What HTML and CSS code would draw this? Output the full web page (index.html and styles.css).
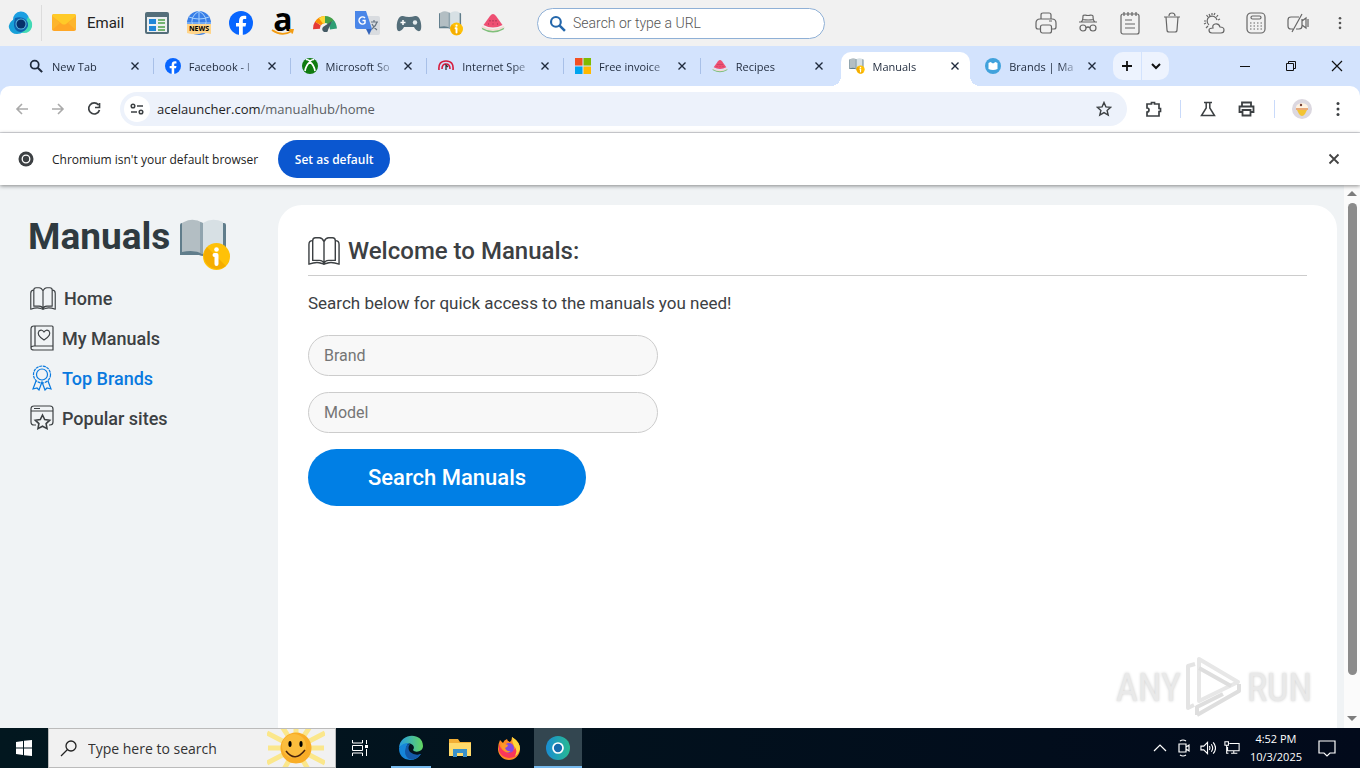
FILE: index.html
```html
<!DOCTYPE html>
<html lang="en">
	<head>
		<meta charset="UTF-8">
		<meta name="viewport" content="width=device-width, initial-scale=1.0">
		<title>Manuals</title>
		<link rel="stylesheet" href="styles.css">
	</head>
	<body>
		<!-- shared icons -->
		<svg class="sprite" aria-hidden="true">
			<symbol id="i-close" viewBox="0 0 16 16"><path d="M4 4l8 8M12 4l-8 8" fill="none" stroke="currentColor" stroke-width="1.6"/></symbol>
			<symbol id="i-search" viewBox="0 0 16 16"><circle cx="6.5" cy="6.5" r="4.6" fill="none" stroke="currentColor" stroke-width="2"/><path d="M10 10l5 5" stroke="currentColor" stroke-width="2.4"/></symbol>
			<symbol id="i-dots" viewBox="0 0 16 16"><g fill="currentColor"><circle cx="8" cy="2.5" r="1.5"/><circle cx="8" cy="8" r="1.5"/><circle cx="8" cy="13.5" r="1.5"/></g></symbol>
			<symbol id="i-facebook" viewBox="0 0 24 24"><circle cx="12" cy="12" r="12" fill="#0866ff"/><path d="M10 24v-8.500H7V12h3v-2c0-3.500 1.800-5.200 5-5.200.8 0 1.600.1 2.200.3v3H15.500c-1.300 0-1.700.7-1.700 1.700V12h3.400l-.7 3.500h-2.700V24z" fill="#fff"/></symbol>
			<symbol id="i-melon" viewBox="0 0 24 24"><path d="M12 3q-1.500 0-3 2L2.500 14q9.500 5 19 0L15 5q-1.500-2-3-2z" fill="#ee4f72"/><path d="M1.500 15q10.500 6 21 0l.8 1q-11.300 7.500-22.600 0z" fill="#f6d9d3"/><path d="M.5 16.500q11.500 7 23 0l-1 2q-10.500 6-21 0z" fill="#7fbf7a"/><path d="M9 9v1.500m3-1.500v1.500m3-1.500v1.500M7.500 12.500v1m4.500-1v1m4.500-1v1" stroke="#9c3350" stroke-width="1"/></symbol>
			<symbol id="i-manual" viewBox="0 0 50 52"><path d="M0 6q0-2 2-2h42q2 0 2 2v30H27q-4 2-8 0H0z" fill="#607d8b"/><path d="M4 3q9-5 19 1v31q-9-5-21-2V4z" fill="#b3bec3"/><path d="M23 4q9-6 20-1v30q-11-3-20 2z" fill="#d7e0e4"/><path d="M20 3l3 1v31l-3-1z" fill="#90a4ae"/><circle cx="36.500" cy="37.500" r="13.500" fill="#ffc107"/><path d="M27 28a13.500 13.500 0 0 0 19 19z" fill="#f5ad00"/><circle cx="36.500" cy="30.500" r="2.300" fill="#fff"/><path d="M34.500 36h2v9" stroke="#fff" stroke-width="4" stroke-linecap="round" stroke-linejoin="round" fill="none"/></symbol>
			<symbol id="i-book" viewBox="0 0 34 30"><g fill="none" stroke="currentColor" stroke-width="1.5" stroke-linejoin="round"><path d="M17 5v24M17 5q-2-4-5-4H8Q5 1 5 4v21h7q4 0 5 4 1-4 5-4h7V4q0-3-3-3h-4q-3 0-5 4z"/><path d="M5 4Q1 4 1 8v21q8-3 13-1l3 1 3-1q5-2 13 1V8q0-4-4-4"/></g></symbol>
		</svg>

		<header class="launcher">
			<button class="tool" aria-label="Launcher">
				<svg width="26" height="26" viewBox="0 0 26 26"><path d="M5 10a8 8 0 0 1 16-1q-1 3-3 3-4-5-9-1-3 0-4-1z" fill="#1c9fe2"/><path d="M20 7q5 4 4 10-2 6-8 6-5 0-7-4 7 1 9-5 0-4 2-7z" fill="#42d9b5"/><path d="M6 9q-6 4-5 9 2 6 8 6 4 0 6-2-7-1-8-7 0-4-1-6z" fill="#17a0d8"/><path d="M7 8q6-2 10 1 5 4 2 9-4 6-10 3-5-4-2-13z" fill="#0d62ae"/><circle cx="13" cy="14" r="5.500" fill="#58b4dc"/><circle cx="13" cy="14" r="4.500" fill="#06306a"/></svg>
			</button>
			<button class="email">
				<svg width="24" height="18" viewBox="0 0 24 18"><rect width="24" height="17" rx="2" fill="#ffa726"/><path d="M0 16V2l8 7zM24 16V2l-8 7z" fill="#fdb52c"/><path d="M1 0h22l1 2-10 8q-2 1-4 0L0 2z" fill="#ffca28"/></svg>
				<span>Email</span>
			</button>
			<button class="tool" aria-label="Portal">
				<svg width="26" height="24" viewBox="0 0 26 24"><rect x="1" y="1" width="24" height="22" rx="2" fill="#546e7a"/><path d="M3 6h20v15H3z" fill="#eceff1"/><path d="M5 8h7v5H5zM5 15h7v5H5z" fill="#2086d8"/><path d="M14 9h7M14 12h7M14 16h7M14 19h7" stroke="#4ba047" stroke-width="1.600"/></svg>
			</button>
			<button class="tool" aria-label="News">
				<svg width="26" height="26" viewBox="0 0 26 26"><circle cx="13" cy="13" r="12" fill="#397fe7"/><path d="M1 13h24M13 1v14M3 7q10 4 20 0M13 1Q3 7 7 16M13 1q10 6 6 15" fill="none" stroke="#a7d2ff"/><path d="M1 14h24v10q-6-2-12 0-6 1-12-1z" fill="#ffd58a"/><text x="13" y="21" class="news-text">NEWS</text></svg>
			</button>
			<button class="tool" aria-label="Facebook"><svg width="24" height="24"><use href="#i-facebook"/></svg></button>
			<button class="tool amazon" aria-label="Amazon">
				<span>a</span>
				<svg width="24" height="8" viewBox="0 0 24 8"><path d="M1 1q10 7 20 1M18 1l4-.5-1 4" fill="none" stroke="#f39c12" stroke-width="1.700"/></svg>
			</button>
			<button class="tool" aria-label="Speed test">
				<svg width="26" height="18" viewBox="0 0 26 18"><g fill="none" stroke-width="7"><path d="M4.500 15A8.500 8.500 0 0 1 6 9.500" stroke="#e53935"/><path d="M6 9.500Q8 6 13 5.500" stroke="#fb8c00"/><path d="M9 7q2-1.500 4-1.500" stroke="#fdd835"/><path d="M13 5.500q4 0 6 3" stroke="#43a047"/><path d="M19 8.500q2 2 2.500 6.500" stroke="#2e9e74"/></g><path d="M20 7l-9 6q-2 3 1 5 4 1 4-2z" fill="#455a64"/></svg>
			</button>
			<button class="tool" aria-label="Translate">
				<svg width="26" height="26" viewBox="0 0 26 26"><path d="M10 6h14q2 0 2 2v15q0 2-2 2H15z" fill="#d9dce0"/><path d="M1 1h11l6 18H3q-2 0-2-2z" fill="#4a86e8"/><path d="M12 19h6l-3 6z" fill="#3464ba"/><path d="M11 8a3.500 3.500 0 1 0 0 5V10.500H8.500" fill="none" stroke="#fff" stroke-width="1.500"/><path d="M17 12h7m-4-2v2m3 0q-1 4-5 7m0-5q2 4 5 6" fill="none" stroke="#687582" stroke-width="1.200"/></svg>
			</button>
			<button class="tool" aria-label="Games">
				<svg width="26" height="18" viewBox="0 0 26 18"><path d="M7 2q6 2 12 0c5-1 7 8 6 13-1 4-5 2-7-2H8c-2 4-6 6-7 2C0 10 2 1 7 2z" fill="#546e7a"/><path d="M7 6v5M4.500 8.500h5" stroke="#fff" stroke-width="1.500"/><circle cx="19" cy="8.500" r="2.200" fill="#e6ecee"/></svg>
			</button>
			<button class="tool" aria-label="Manuals"><svg width="24" height="25"><use href="#i-manual"/></svg></button>
			<button class="tool" aria-label="Recipes"><svg width="26" height="24"><use href="#i-melon"/></svg></button>
			<label class="top-search">
				<svg width="17" height="17"><use href="#i-search"/></svg>
				<input type="text" placeholder="Search or type a URL" aria-label="Search or type a URL">
			</label>
			<div class="launcher-right">
				<button class="tool" aria-label="Print"><svg class="line" width="22" height="22" viewBox="0 0 22 22"><path d="M6 7V3q0-2 2-2h6q2 0 2 2v4M5 17H3q-2 0-2-2v-4q0-4 4-4h12q4 0 4 4v4q0 2-2 2h-2M14 9h3"/><rect x="5.500" y="13" width="11" height="8" rx="2"/></svg></button>
				<button class="tool" aria-label="Incognito"><svg class="line" width="20" height="18" viewBox="0 0 20 18"><path d="M1 8h18M3 8q2-1 2-6 0-1 2-1 3 1 6 0 2 0 2 1 0 5 2 6M4.500 5.500q6 1 11 0M8 14q2-2 4 0"/><circle cx="5" cy="14" r="3"/><circle cx="15" cy="14" r="3"/></svg></button>
				<button class="tool" aria-label="Notes"><svg class="line" width="20" height="24" viewBox="0 0 20 24"><rect x="1" y="3" width="18" height="20" rx="2"/><path d="M4 1v4m4-4v4m4-4v4m4-4v4M5 9h7M5 13h10M5 17h10"/></svg></button>
				<button class="tool" aria-label="Trash"><svg class="line" width="18" height="22" viewBox="0 0 18 22"><path d="M1 5h16M6 4q0-3 3-3t3 3M3 5l1 13q0 2 2 2h6q2 0 2-2l1-13"/></svg></button>
				<button class="tool" aria-label="Weather"><svg class="line" width="22" height="22" viewBox="0 0 22 22"><path d="M6 13a5 5 0 1 1 8-5M9 1v2M3.500 3L5 5M1 9h2m0 7l2-2M15 3l-1.500 2M12 1l-1 2M1 12l2-1M17 7l-2 1M6 2l1 2M9 21h9q3 0 3-3t-4-3q-1-4-5-3-3 1-2 4-4 0-4 2 0 3 3 3z"/></svg></button>
				<button class="tool" aria-label="Calculator"><svg class="line" width="20" height="22" viewBox="0 0 20 22"><rect x="1" y="1" width="18" height="20" rx="4"/><rect x="5" y="4" width="10" height="3" rx="1.500"/><path d="M4 11h12M4 14h12M4 17h12" stroke-dasharray="1.500 2"/></svg></button>
				<button class="tool" aria-label="Camera off"><svg class="line" width="22" height="20" viewBox="0 0 22 20"><path d="M6 16H4q-3 0-3-3V7q0-3 3-3h8M13 16h-4M15 6v7q0 3-3 3M15 8l4-3v10l-4-3M21 6v8M15 1L5 19"/></svg></button>
				<button class="tool menu" aria-label="Menu"><svg width="14" height="14"><use href="#i-dots"/></svg></button>
			</div>
		</header>

		<div class="tab-strip">
			<div class="tabs">
				<div class="tab">
					<svg class="favicon small"><use href="#i-search"/></svg>
					<span class="tab-name">New Tab</span>
					<button class="tab-close" aria-label="Close tab"><svg><use href="#i-close"/></svg></button>
				</div>
				<div class="tab">
					<svg class="favicon"><use href="#i-facebook"/></svg>
					<span class="tab-name">Facebook - l</span>
					<button class="tab-close" aria-label="Close tab"><svg><use href="#i-close"/></svg></button>
				</div>
				<div class="tab">
					<svg class="favicon" viewBox="0 0 16 16"><circle cx="8" cy="8" r="8" fill="#107c10"/><path d="M4 1.500q2 0 4 1.500 2-1.500 4-1.500M8 4q-4 3-5 9M8 4q4 3 5 9" fill="none" stroke="#fff" stroke-width="1.700"/></svg>
					<span class="tab-name">Microsoft So</span>
					<button class="tab-close" aria-label="Close tab"><svg><use href="#i-close"/></svg></button>
				</div>
				<div class="tab">
					<svg class="favicon" viewBox="0 0 16 16"><path d="M1 12Q0 3 8 3t7 9M4 11Q4 6 8 6t4 5" fill="none" stroke="#d61b3c" stroke-width="1.600"/><path d="M8 12V7l2 2" fill="none" stroke="#333" stroke-width="1.300"/></svg>
					<span class="tab-name">Internet Spe</span>
					<button class="tab-close" aria-label="Close tab"><svg><use href="#i-close"/></svg></button>
				</div>
				<div class="tab">
					<svg class="favicon" viewBox="0 0 16 16"><path d="M0 0h7.500v7.500H0z" fill="#f25022"/><path d="M8.500 0H16v7.500H8.500z" fill="#7fba00"/><path d="M0 8.500h7.500V16H0z" fill="#00a4ef"/><path d="M8.500 8.500H16V16H8.500z" fill="#ffb900"/></svg>
					<span class="tab-name">Free invoice</span>
					<button class="tab-close" aria-label="Close tab"><svg><use href="#i-close"/></svg></button>
				</div>
				<div class="tab">
					<svg class="favicon"><use href="#i-melon"/></svg>
					<span class="tab-name">Recipes</span>
					<button class="tab-close" aria-label="Close tab"><svg><use href="#i-close"/></svg></button>
				</div>
				<div class="tab active">
					<svg class="favicon"><use href="#i-manual"/></svg>
					<span class="tab-name">Manuals</span>
					<button class="tab-close" aria-label="Close tab"><svg><use href="#i-close"/></svg></button>
				</div>
				<div class="tab">
					<svg class="favicon" viewBox="0 0 16 16"><circle cx="8" cy="8" r="8" fill="#41a2dc"/><path d="M3.500 5l2-1L8 5.500 10.500 4l2 1v6q-4.500 2-9 0z" fill="#fff"/></svg>
					<span class="tab-name">Brands | Ma</span>
					<button class="tab-close" aria-label="Close tab"><svg><use href="#i-close"/></svg></button>
				</div>
			</div>
			<div class="new-tab">
				<button aria-label="New tab"><svg width="12" height="12" viewBox="0 0 12 12"><path d="M6 1v10M1 6h10" stroke="currentColor" stroke-width="1.800"/></svg></button>
				<button aria-label="Tab search"><svg width="10" height="10" viewBox="0 0 10 10"><path d="M1 3l4 4 4-4" fill="none" stroke="currentColor" stroke-width="2"/></svg></button>
			</div>
			<div class="window-controls">
				<button aria-label="Minimize"><svg width="12" height="12" viewBox="0 0 12 12"><path d="M1 6.500h10" stroke="currentColor"/></svg></button>
				<button aria-label="Restore"><svg width="12" height="12" viewBox="0 0 12 12"><path d="M1.500 3.500h7v7h-7zM3.500 3.500v-2h7v7h-2" fill="none" stroke="currentColor"/></svg></button>
				<button aria-label="Close"><svg width="12" height="12" viewBox="0 0 12 12"><path d="M1 1l10 10M11 1L1 11" stroke="currentColor" stroke-width="1.200"/></svg></button>
			</div>
		</div>

		<div class="address-wrap">
			<div class="address-row">
				<button class="nav-btn off" aria-label="Back"><svg width="16" height="16" viewBox="0 0 16 16"><path d="M14 8H3M8 3L3 8l5 5" fill="none" stroke="currentColor" stroke-width="1.600"/></svg></button>
				<button class="nav-btn off" aria-label="Forward"><svg width="16" height="16" viewBox="0 0 16 16"><path d="M2 8h11M8 3l5 5-5 5" fill="none" stroke="currentColor" stroke-width="1.600"/></svg></button>
				<button class="nav-btn" aria-label="Reload"><svg width="16" height="16" viewBox="0 0 16 16"><path d="M12.500 4A5.500 5.500 0 1 0 13.500 9M13.500 2v4.500H9" fill="none" stroke="currentColor" stroke-width="1.700"/></svg></button>
				<div class="omnibox">
					<button class="site-info" aria-label="Site information"><svg width="14" height="14" viewBox="0 0 14 14"><g fill="none" stroke="currentColor" stroke-width="1.500"><circle cx="3" cy="4" r="1.800"/><path d="M7 4h6M1 10h6"/><circle cx="11" cy="10" r="1.800"/></g></svg></button>
					<a class="url" href="#">acelauncher.com<span>/manualhub/home</span></a>
					<button class="bookmark" aria-label="Bookmark"><svg width="16" height="16" viewBox="0 0 16 16"><path d="M8 1.500l1.900 4.400 4.800.4-3.600 3.100 1.100 4.700L8 11.600l-4.200 2.500 1.100-4.700L1.300 6.300l4.800-.4z" fill="none" stroke="currentColor" stroke-width="1.400"/></svg></button>
				</div>
				<div class="extensions">
					<button class="puzzle" aria-label="Extensions"><svg width="18" height="18" viewBox="0 0 18 18"><path d="M2 4h4.500V2.500h3V4H14v4.500h1.500v3H14V16H2v-4q2 0 2-2t-2-2z" fill="none" stroke="currentColor" stroke-width="1.700"/></svg></button>
					<button aria-label="Labs"><svg width="16" height="16" viewBox="0 0 16 16"><path d="M4 1.500h8M6.200 1.500v5.500L1.500 14.500h13L9.800 7V1.500" fill="none" stroke="currentColor" stroke-width="1.500"/></svg></button>
					<button class="print" aria-label="Print"><svg width="17" height="16" viewBox="0 0 17 16"><path d="M4 5V1.500h9V5M4 11H1.500V5.500h14V11H13M4.500 9h8v5.500h-8z" fill="none" stroke="currentColor" stroke-width="1.800"/></svg></button>
					<button class="profile" aria-label="Profile"><svg width="20" height="20" viewBox="0 0 20 20"><circle cx="10" cy="10" r="10" fill="#dcd8e0"/><path d="M4 9h12l-3 6q-3 4-6 0z" fill="#f3c433"/><path d="M4 10q-1-5 6-6 7 1 6 6z" fill="#fff3e3"/><path d="M4 10h12" stroke="#e9a979" stroke-width="2"/><circle cx="9" cy="6" r="1.200" fill="#774236"/></svg></button>
					<button class="more" aria-label="Menu"><svg width="16" height="16"><use href="#i-dots"/></svg></button>
				</div>
			</div>
		</div>

		<div class="infobar">
			<svg width="16" height="16" viewBox="0 0 16 16"><circle cx="8" cy="8" r="7.500" fill="#3c4043"/><circle cx="8" cy="8" r="3.800" fill="none" stroke="#fff" stroke-width="1.300"/></svg>
			<span>Chromium isn't your default browser</span>
			<button class="set-default">Set as default</button>
			<button class="infobar-close" aria-label="Dismiss"><svg width="18" height="18"><use href="#i-close"/></svg></button>
		</div>

		<div class="page">
			<aside class="sidebar">
				<h1>Manuals <svg width="50" height="52"><use href="#i-manual"/></svg></h1>
				<nav>
					<a href="#"><svg width="26" height="23"><use href="#i-book"/></svg>Home</a>
					<a href="#"><svg class="nav-line" width="24" height="26" viewBox="0 0 24 26"><path d="M4 1h18q1 0 1 1v19H4q-3 0-3 2V4q0-3 3-3zM5 1v20M23 21v4H4q-3 0-3-2M14 15q-8-5-5-9 3-2 5 1 2-3 5-1 3 4-5 9z"/></svg>My Manuals</a>
					<a href="#" class="current"><svg class="nav-line" width="24" height="26" viewBox="0 0 24 26"><circle cx="12" cy="9.500" r="5.500"/><circle cx="12" cy="9.500" r="8.500" stroke-dasharray="3 .7"/><path d="M6 16L3 24l4-1 2 2 3-8 3 8 2-2 4 1-3-8"/></svg>Top Brands</a>
					<a href="#"><svg class="nav-line" width="24" height="26" viewBox="0 0 24 26"><path d="M6 20H4q-3 0-3-3V4q0-3 3-3h16q3 0 3 3v13q0 3-3 3h-1M1 6h22M4 3.500h6"/><path d="M12.500 10l2.200 4.500 5 .7-3.600 3.400.9 5-4.500-2.400L8 23.600l.9-5-3.600-3.400 5-.7z" stroke-width="1.600"/></svg>Popular sites</a>
				</nav>
			</aside>
			<main class="card">
				<h2><svg width="32" height="30"><use href="#i-book"/></svg>Welcome to Manuals:</h2>
				<p>Search below for quick access to the manuals you need!</p>
				<form class="search-form">
					<input type="text" placeholder="Brand" aria-label="Brand">
					<input type="text" placeholder="Model" aria-label="Model">
					<button type="submit">Search Manuals</button>
				</form>
			</main>
			<div class="scrollbar">
				<svg width="10" height="6" viewBox="0 0 10 6"><path d="M0 6l5-5 5 5z" fill="#7d7d7d"/></svg>
				<div class="thumb"></div>
				<svg width="10" height="6" viewBox="0 0 10 6"><path d="M0 0l5 5 5-5z" fill="#7d7d7d"/></svg>
			</div>
			<div class="watermark">
				<span>ANY</span>
				<svg width="60" height="64" viewBox="0 0 60 64"><g fill="none" stroke-width="4" stroke-linejoin="round"><path d="M11 8L4 10v42l6-3" stroke="#e4e4e4"/><path d="M15 3v42l39-19z" stroke="#e7e7e7"/><path d="M15 12l32 18M13 59l42-24V28M13 59v-8l26-13" stroke="#dedede"/></g></svg>
				<span>RUN</span>
			</div>
		</div>

		<footer class="taskbar">
			<button class="start" aria-label="Start"><svg width="16" height="16" viewBox="0 0 16 16"><path d="M0 2l7-1v6.500H0zM8 .8L16 0v7.500H8zM0 8.500h7V15l-7-1zM8 8.500h8V16l-8-.8z" fill="#fff"/></svg></button>
			<label class="task-search">
				<svg width="18" height="18" viewBox="0 0 18 18"><circle cx="11" cy="7" r="5" fill="none" stroke="#222" stroke-width="1.300"/><path d="M7.500 10.500L1 17" stroke="#222" stroke-width="1.300"/></svg>
				<input type="text" placeholder="Type here to search" aria-label="Type here to search">
				<svg width="58" height="38" viewBox="0 0 58 38"><path d="M29 19L14-4M29 19L44-4M29 19V-4M29 19L0 4M29 19L58 4M29 19H1M29 19h28M29 19L0 34M29 19l29 15M29 19L16 42M29 19l13 23" stroke="#fbe78b" stroke-width="5"/><circle cx="29" cy="19" r="15.500" fill="#f9ad27"/><circle cx="27" cy="17" r="12" fill="#fbbd3d"/><ellipse cx="23" cy="15" rx="1.600" ry="3"/><ellipse cx="34" cy="15" rx="1.600" ry="3"/><path d="M19 22q9 12 19-1" fill="none" stroke="#4b230c" stroke-width="1.500"/></svg>
			</label>
			<button class="task task-view" aria-label="Task view"><svg width="16" height="16" viewBox="0 0 16 16"><path d="M.5 0v3h10V0M.5 16v-3h10v3M.5 5.500h10v5H.5zM14.500 0v4M14.500 9v7" fill="none" stroke="#fff"/><path d="M13 5h3v3h-3z" fill="#fff"/></svg></button>
			<button class="task open" aria-label="Edge"><svg width="26" height="26" viewBox="0 0 26 26"><defs><linearGradient id="edge"><stop stop-color="#259ce5"/><stop offset="1" stop-color="#63d65f"/></linearGradient></defs><path d="M1 13C2-3 25-3 25 11c0 6-8 7-10 4 3-4-2-8-7-6-4 1-7 4-7 4z" fill="url(#edge)"/><path d="M1 13q3-5 10-5-5 4-1 10 5 5 13 1-4 6-11 6Q1 24 1 13z" fill="#1686d9"/><path d="M8 12q1-3 4-3-3 4 0 8 5 4 11 2-5 7-12 5-6-4-3-12z" fill="#1459a8"/></svg></button>
			<button class="task" aria-label="Files"><svg width="22" height="20" viewBox="0 0 22 20"><path d="M0 1h9l2 3h11v14H0z" fill="#f2ae35"/><path d="M0 5h22v13H0z" fill="#ffda6b"/><path d="M4 19v-8h14v8h-4v-4H8v4z" fill="#3a91c9"/></svg></button>
			<button class="task" aria-label="Firefox"><svg width="24" height="24" viewBox="0 0 24 24"><path d="M3 4l3 3q1-3 4-4 0 2 3 3 2-2 2-5 8 5 8 12a11 11 0 0 1-22 0Q1 8 3 4z" fill="#ff8b24"/><path d="M2 8q3 10 13 7 5-2 3-8 5 4 4 9a11 11 0 0 1-20-1z" fill="#fa375b"/><path d="M15 1q8 5 8 12-2 6-5 7 3-6-1-10-2-4-2-9z" fill="#ffd83b"/><circle cx="12" cy="12" r="5" fill="#8549df"/><path d="M5 7l6 2q0 2-3 3 2 4 6 3-3 3-7 0-4-4-2-8z" fill="#ff9829"/></svg></button>
			<button class="task open selected" aria-label="Ace Launcher"><svg width="24" height="24" viewBox="0 0 24 24"><defs><linearGradient id="ace"><stop stop-color="#198dd2"/><stop offset="1" stop-color="#28ba91"/></linearGradient></defs><circle cx="12" cy="12" r="12" fill="url(#ace)"/><circle cx="12" cy="12" r="5" fill="#176cad" stroke="#fff" stroke-width="1.700"/></svg></button>
			<div class="tray">
				<svg width="16" height="16" viewBox="0 0 16 16"><path d="M2 11l6-6 6 6"/></svg>
				<svg width="16" height="18" viewBox="0 0 16 18"><path d="M3 5h7v8H3zM10 8l3-2v6l-3-2M4 2q3-2 6 0M4 16q3 2 6 0"/></svg>
				<svg width="16" height="16" viewBox="0 0 17 16"><path d="M1 6h3l4-4v12l-4-4H1zM10 6q1 2 0 4M12 4q3 4 0 8M14 2q5 6 0 12"/></svg>
				<svg width="16" height="16" viewBox="0 0 18 16"><path d="M6 3h11v8H4V7M8 14h7M11 11v3M1 1h4v4H1zM3 5v9h2"/></svg>
				<div class="clock"><span>4:52 PM</span><span>10/3/2025</span></div>
				<svg width="18" height="18" viewBox="0 0 18 18"><path d="M1 2h16v12h-5l-3 3-3-3H1z"/></svg>
			</div>
		</footer>
	</body>
</html>
```
FILE: styles.css
```css
* {
    box-sizing: border-box;
}
body {
    display: flex;
    flex-direction: column;
    font-family: "Open Sans", "Noto Sans", sans-serif;
    font-size: 12px;
    height: 100vh;
    margin: 0;
    overflow: hidden;
}
button, input {
    background: none;
    border: none;
    color: inherit;
    font: inherit;
    margin: 0;
    outline: none;
    padding: 0;
}
button {
    align-items: center;
    cursor: pointer;
    display: flex;
    justify-content: center;
}
svg {
    display: block;
    flex-shrink: 0;
}
.sprite {
    height: 0;
    position: absolute;
    width: 0;
}

/* launcher bar */
.launcher {
    align-items: center;
    background-color: #f1f1f1;
    display: flex;
    font-family: Roboto, sans-serif;
    height: 46px;
}
.tool {
    height: 46px;
    width: 42px;
}
.tool.menu {
    width: 41px;
}
.email {
    border-left: 1px solid #dcdcdc;
    color: #222;
    font-size: 15px;
    gap: 11px;
    height: 36px;
    justify-content: flex-start;
    margin-left: -1px;
    padding-left: 10px;
    width: 95px;
}
.news-text {
    font: bold 7px "Open Sans", sans-serif;
    text-anchor: middle;
}
.amazon {
    flex-direction: column;
    font: bold 32px "Open Sans", sans-serif;
}
.amazon span {
    line-height: 20px;
}
.top-search {
    align-items: center;
    background-color: white;
    border: 1px solid #8fb0d6;
    border-radius: 16px;
    color: #2467ab;
    display: flex;
    gap: 7px;
    height: 31px;
    margin-left: 23px;
    padding: 0 11px;
    width: 288px;
}
.top-search input {
    color: #444;
    flex: 1;
    font-size: 14px;
    font-weight: 300;
}
.top-search input::placeholder {
    color: #555;
}
.launcher-right {
    color: #555;
    display: flex;
    margin-left: auto;
}
.line {
    fill: none;
    stroke: #666;
    stroke-width: 1.2;
}

/* tabs */
.tab-strip {
    background-color: #d3e3fd;
    color: #1f2a3c;
    display: flex;
    height: 40px;
    padding-left: 16px;
}
.tabs {
    display: flex;
    flex: 0 1 1094px;
    font-size: 11px;
    min-width: 0;
}
.tab {
    align-items: center;
    display: flex;
    flex: 1 1 0;
    min-width: 0;
    padding: 0 11px 0 12px;
    position: relative;
}
.tab::after {
    background-color: #a8c0e8;
    content: "";
    height: 16px;
    position: absolute;
    right: -1px;
    width: 1px;
}
.tab:has(+ .active)::after, .tab:last-child::after {
    display: none;
}
.tab.active {
    z-index: 0;
}
.tab.active::before {
    background: radial-gradient(circle at 0 0, transparent 10px, white 10px) left bottom / 10px 10px no-repeat,
        radial-gradient(circle at 100% 0, transparent 10px, white 10px) right bottom / 10px 10px no-repeat;
    content: "";
    inset: 0 -7px 0 -6px;
    position: absolute;
    z-index: -1;
}
.tab.active::after {
    background-color: white;
    border-radius: 10px 10px 0 0;
    height: auto;
    inset: 6px 3px 0 4px;
    width: auto;
    z-index: -1;
}
.favicon {
    height: 16px;
    width: 16px;
}
.favicon.small {
    height: 14px;
    margin: 0 1px;
    width: 14px;
}
.tab-name {
    flex: 1;
    margin: 0 4px 0 8px;
    mask-image: linear-gradient(to right, black 70%, transparent);
    min-width: 0;
    overflow: hidden;
    white-space: nowrap;
}
.tab-close svg {
    height: 14px;
    width: 14px;
}
.new-tab {
    align-self: center;
    background-color: #edf3fe;
    border-radius: 10px;
    display: flex;
    height: 28px;
    margin-left: 3px;
}
.new-tab button {
    color: #111;
    width: 28px;
}
.new-tab button + button {
    border-left: 1px solid #d3e3fd;
}
.window-controls {
    color: #111;
    display: flex;
    margin-left: auto;
}
.window-controls button {
    width: 46px;
}

/* address row */
.address-wrap {
    background-color: #d3e3fd;
}
.address-row {
    align-items: center;
    background-color: white;
    border-bottom: 1px solid #dadce0;
    border-radius: 10px 10px 0 0;
    color: #3c4043;
    display: flex;
    height: 47px;
    padding-left: 4px;
}
.nav-btn {
    height: 36px;
    width: 36px;
}
.nav-btn.off {
    color: #aaa;
}
.omnibox {
    align-items: center;
    background-color: #edf2fb;
    border-radius: 17px;
    display: flex;
    flex: 1;
    height: 34px;
    margin-left: 8px;
    padding: 0 15px 0 4px;
}
.site-info {
    background-color: white;
    border-radius: 50%;
    height: 26px;
    width: 26px;
}
.url {
    color: #1f1f1f;
    flex: 1;
    font-size: 13px;
    margin-left: 7px;
    text-decoration: none;
}
.url span {
    color: #5a5e63;
}
.extensions {
    align-items: center;
    display: flex;
    margin-left: 8px;
}
.extensions button {
    height: 18px;
    width: 38px;
}
.extensions .puzzle {
    border-right: 1px solid #c9dafa;
    margin-right: 8px;
    padding-right: 8px;
    width: 46px;
}
.extensions .print {
    border-right: 1px solid #c9dafa;
    padding-right: 9px;
    width: 48px;
}
.extensions .profile {
    width: 54px;
}
.extensions .more {
    margin-right: 13px;
    width: 18px;
}

/* default browser notice */
.infobar {
    align-items: center;
    background-color: white;
    box-shadow: 0 1px 4px rgba(0,0,0,.45);
    color: #222;
    display: flex;
    height: 52px;
    padding: 0 17px 0 18px;
    z-index: 1;
}
.infobar span {
    margin: 0 20px 0 18px;
}
.set-default {
    background-color: #0b57d0;
    border-radius: 19px;
    color: white;
    font-weight: 600;
    height: 38px;
    width: 112px;
}
.infobar-close {
    color: #444;
    margin-left: auto;
}

/* manuals page */
.page {
    background-color: #f0f3f5;
    color: #3c4043;
    display: flex;
    flex: 1;
    font-family: Roboto, sans-serif;
    min-height: 0;
    position: relative;
}
.sidebar {
    padding: 27px 0 0 28px;
    width: 278px;
}
.sidebar h1 {
    align-items: flex-start;
    color: #2f3a40;
    display: flex;
    font-size: 37px;
    gap: 10px;
    line-height: 50px;
    margin: 0 0 7px;
}
.sidebar h1 svg {
    margin-top: 7px;
}
.sidebar nav a {
    align-items: center;
    color: inherit;
    display: flex;
    font-size: 18px;
    font-weight: 500;
    gap: 8px;
    height: 40px;
    padding-left: 2px;
    text-decoration: none;
}
.sidebar nav a.current {
    color: #0879df;
}
.nav-line {
    fill: none;
    stroke: currentColor;
    stroke-width: 1.2;
}
.card {
    background-color: white;
    border-radius: 24px 24px 0 0;
    flex: 1;
    margin: 20px 7px 0 0;
    padding: 26px 30px 0;
}
.card h2 {
    align-items: center;
    border-bottom: 1px solid #ccc;
    display: flex;
    font-size: 24px;
    font-weight: 500;
    gap: 8px;
    height: 45px;
    margin: 0;
    padding-bottom: 4px;
}
.card p {
    font-size: 17px;
    line-height: 24px;
    margin: 15px 0 20px;
}
.search-form {
    align-items: flex-start;
    display: flex;
    flex-direction: column;
    gap: 16px;
}
.search-form input {
    background-color: #f8f8f8;
    border: 1px solid #ccc;
    border-radius: 21px;
    font-size: 16px;
    height: 41px;
    padding: 0 15px;
    width: 350px;
}
.search-form button {
    background-color: #007fe5;
    border-radius: 29px;
    color: white;
    font-size: 22px;
    font-weight: 500;
    height: 57px;
    padding: 0 60px;
}
.scrollbar {
    align-items: center;
    background-color: #fbfbfb;
    display: flex;
    flex-direction: column;
    gap: 7px;
    padding: 5px 0 6px;
    width: 16px;
}
.thumb {
    background-color: #8b8b8b;
    border-radius: 5px;
    flex: 1;
    margin-bottom: 34px;
    width: 9px;
}
.watermark {
    align-items: center;
    bottom: 8px;
    color: #e9e9e9;
    display: flex;
    font-family: "Roboto Condensed", "Liberation Sans Narrow", Roboto, sans-serif;
    font-size: 38px;
    gap: 3px;
    position: absolute;
    right: 48px;
    text-shadow: 0 0 3px #ccc;
}

/* taskbar */
.taskbar {
    background: linear-gradient(to right, #02171f, #020a1b);
    color: white;
    display: flex;
    height: 40px;
}
.start, .task {
    width: 48px;
}
.task-search {
    align-items: center;
    background-color: #f1f1f1;
    border: 1px solid #bbb;
    color: #222;
    display: flex;
    padding: 0 10px 0 11px;
    width: 288px;
}
.task-search input {
    flex: 1;
    font-size: 14px;
    margin-left: 10px;
    min-width: 0;
}
.task-search input::placeholder {
    color: #333;
}
.task {
    margin-right: 1px;
}
.task-view {
    margin-right: 3px;
}
.task.open {
    background: linear-gradient(#76b9ed, #76b9ed) bottom / 40px 2px no-repeat;
}
.task.selected {
    background-color: #334650;
    background-size: 100% 2px;
}
.tray {
    align-items: center;
    display: flex;
    gap: 8px;
    margin-left: auto;
    padding-right: 24px;
}
.tray svg {
    fill: none;
    stroke: white;
    stroke-width: 1.2;
}
.clock {
    display: flex;
    flex-direction: column;
    font-size: 11px;
    line-height: 18px;
    margin: 0 8px 0 2px;
    text-align: center;
}
```
